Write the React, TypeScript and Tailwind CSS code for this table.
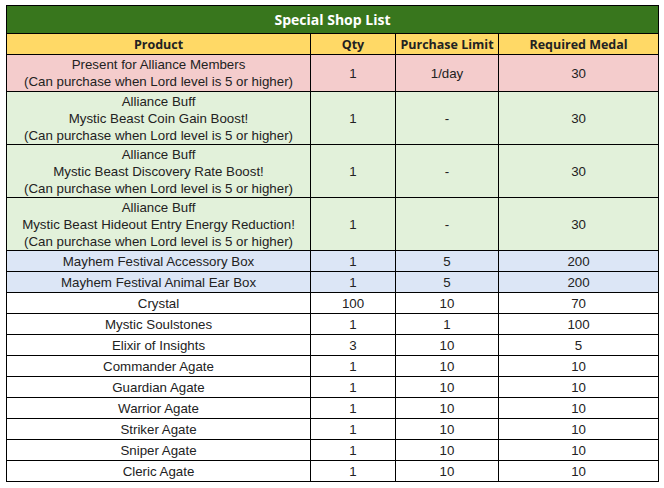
type Row = {
  product: string[];
  qty: string;
  limit: string;
  medal: string;
  tone: "pink" | "green" | "blue" | "white";
};

const rows: Row[] = [
  {
    product: ["Present for Alliance Members", "(Can purchase when Lord level is 5 or higher)"],
    qty: "1",
    limit: "1/day",
    medal: "30",
    tone: "pink",
  },
  {
    product: ["Alliance Buff", "Mystic Beast Coin Gain Boost!", "(Can purchase when Lord level is 5 or higher)"],
    qty: "1",
    limit: "-",
    medal: "30",
    tone: "green",
  },
  {
    product: ["Alliance Buff", "Mystic Beast Discovery Rate Boost!", "(Can purchase when Lord level is 5 or higher)"],
    qty: "1",
    limit: "-",
    medal: "30",
    tone: "green",
  },
  {
    product: ["Alliance Buff", "Mystic Beast Hideout Entry Energy Reduction!", "(Can purchase when Lord level is 5 or higher)"],
    qty: "1",
    limit: "-",
    medal: "30",
    tone: "green",
  },
  { product: ["Mayhem Festival Accessory Box"], qty: "1", limit: "5", medal: "200", tone: "blue" },
  { product: ["Mayhem Festival Animal Ear Box"], qty: "1", limit: "5", medal: "200", tone: "blue" },
  { product: ["Crystal"], qty: "100", limit: "10", medal: "70", tone: "white" },
  { product: ["Mystic Soulstones"], qty: "1", limit: "1", medal: "100", tone: "white" },
  { product: ["Elixir of Insights"], qty: "3", limit: "10", medal: "5", tone: "white" },
  { product: ["Commander Agate"], qty: "1", limit: "10", medal: "10", tone: "white" },
  { product: ["Guardian Agate"], qty: "1", limit: "10", medal: "10", tone: "white" },
  { product: ["Warrior Agate"], qty: "1", limit: "10", medal: "10", tone: "white" },
  { product: ["Striker Agate"], qty: "1", limit: "10", medal: "10", tone: "white" },
  { product: ["Sniper Agate"], qty: "1", limit: "10", medal: "10", tone: "white" },
  { product: ["Cleric Agate"], qty: "1", limit: "10", medal: "10", tone: "white" },
];

const toneClass = {
  pink: "bg-[#f4cccc]",
  green: "bg-[#e2f1da]",
  blue: "bg-[#dce6f6]",
  white: "bg-white",
};

const cell = "border border-black px-1 py-0 text-center align-middle";
const headCell = "border border-black px-0 py-0 text-center align-middle whitespace-nowrap";

function App() {
  return (
    <div className="min-h-screen bg-white pl-[6px] pt-[5px]">
      <table
        className="table-fixed border-collapse border border-black text-[13.3px] leading-[17px] text-[#222]"
        style={{ width: 652, fontFamily: '"Liberation Sans", Arial, sans-serif' }}
      >
        <colgroup>
          <col className="w-[304px]" />
          <col className="w-[85px]" />
          <col className="w-[103px]" />
          <col className="w-[160px]" />
        </colgroup>
        <thead>
          <tr>
            <th
              colSpan={4}
              className="h-[28px] border border-black bg-[#38761d] p-0 text-center text-[14px] font-bold leading-[27px] text-white font-['Open_Sans',sans-serif]"
            >
              Special Shop List
            </th>
          </tr>
          <tr className="bg-[#ffd966] font-['Open_Sans',sans-serif] text-[12.5px] font-semibold leading-[19px] text-[#222]">
            <th className={`${headCell} h-[21px]`}>Product</th>
            <th className={headCell}>Qty</th>
            <th className={headCell}>Purchase Limit</th>
            <th className={headCell}>Required Medal</th>
          </tr>
        </thead>
        <tbody>
          {rows.map((row, i) => {
            const h =
              row.product.length === 3 ? "h-[53px]" : row.product.length === 2 ? "h-[37px]" : "h-[21px]";
            return (
              <tr key={i} className={toneClass[row.tone]}>
                <td className={`${cell} ${h}`}>
                  {row.product.map((line, j) => (
                    <div key={j}>{line}</div>
                  ))}
                </td>
                <td className={cell}>{row.qty}</td>
                <td className={cell}>{row.limit}</td>
                <td className={cell}>{row.medal}</td>
              </tr>
            );
          })}
        </tbody>
      </table>
    </div>
  );
}

export default App;
